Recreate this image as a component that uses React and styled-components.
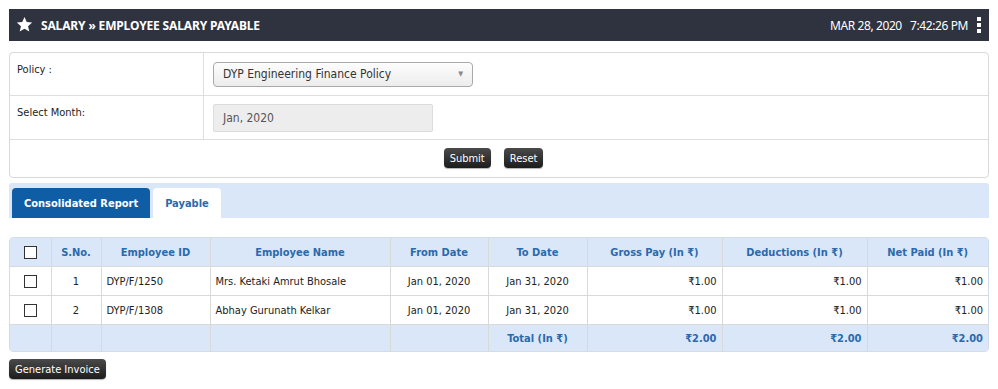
import React from 'react';
import styled, { createGlobalStyle } from 'styled-components';

const GlobalStyle = createGlobalStyle`
  body {
    margin: 0;
    padding: 9px;
    background: #fff;
    font-family: Tahoma, "DejaVu Sans Condensed", "DejaVu Sans", sans-serif;
    font-size: 11px;
    color: #333;
  }
`;

const rows = [
  { id: 'DYP/F/1250', name: 'Mrs. Ketaki Amrut Bhosale' },
  { id: 'DYP/F/1308', name: 'Abhay Gurunath Kelkar' },
];

const StarIcon = () => (
  <svg width="17" height="17" viewBox="0 0 24 24">
    <path
      fill="#fff"
      d="M12 1.5l3.2 7.1 7.6.7-5.8 5.1 1.8 7.6L12 18l-6.8 4 1.8-7.6-5.8-5.1 7.6-.7z"
    />
  </svg>
);

const App = () => {
  return (
    <>
      <GlobalStyle />
      <Page>
        <TitleBar>
          <StarIcon />
          <Title>SALARY » EMPLOYEE SALARY PAYABLE</Title>
          <Clock>MAR 28, 2020&nbsp;&nbsp;&nbsp;7:42:26 PM</Clock>
          <Kebab>
            <i />
            <i />
            <i />
          </Kebab>
        </TitleBar>

        <FormBox>
          <FormRow h={42}>
            <Label>Policy :</Label>
            <Field>
              <Select>
                DYP Engineering Finance Policy
                <Caret>▼</Caret>
              </Select>
            </Field>
          </FormRow>
          <FormRow h={43}>
            <Label>Select Month:</Label>
            <Field>
              <MonthInput>Jan, 2020</MonthInput>
            </Field>
          </FormRow>
          <Actions>
            <Button>Submit</Button>
            <Button>Reset</Button>
          </Actions>
        </FormBox>

        <Tabs>
          <Tab active>Consolidated Report</Tab>
          <Tab>Payable</Tab>
        </Tabs>

        <TableWrap>
          <Table>
            <colgroup>
              <col style={{ width: 41 }} />
              <col style={{ width: 50 }} />
              <col style={{ width: 109 }} />
              <col style={{ width: 180 }} />
              <col style={{ width: 98 }} />
              <col style={{ width: 99 }} />
              <col style={{ width: 135 }} />
              <col style={{ width: 145 }} />
              <col />
            </colgroup>
            <thead>
              <tr>
                <Th><Check /></Th>
                <Th>S.No.</Th>
                <Th>Employee ID</Th>
                <Th>Employee Name</Th>
                <Th>From Date</Th>
                <Th>To Date</Th>
                <Th>Gross Pay (In ₹)</Th>
                <Th>Deductions (In ₹)</Th>
                <Th>Net Paid (In ₹)</Th>
              </tr>
            </thead>
            <tbody>
              {rows.map((r, i) => (
                <tr key={r.id}>
                  <Td align="center"><Check /></Td>
                  <Td align="center">{i + 1}</Td>
                  <Td>{r.id}</Td>
                  <Td>{r.name}</Td>
                  <Td align="center">Jan 01, 2020</Td>
                  <Td align="center">Jan 31, 2020</Td>
                  <Td align="right">₹1.00</Td>
                  <Td align="right">₹1.00</Td>
                  <Td align="right">₹1.00</Td>
                </tr>
              ))}
            </tbody>
            <tfoot>
              <tr>
                <Tf />
                <Tf />
                <Tf />
                <Tf />
                <Tf />
                <Tf align="center">Total (In ₹)</Tf>
                <Tf align="right">₹2.00</Tf>
                <Tf align="right">₹2.00</Tf>
                <Tf align="right">₹2.00</Tf>
              </tr>
            </tfoot>
          </Table>
        </TableWrap>

        <Button>Generate Invoice</Button>
      </Page>
    </>
  );
};

export default App;

const Page = styled.div`
  width: 980px;
`;

const TitleBar = styled.div`
  display: flex;
  align-items: center;
  height: 32px;
  padding: 0 8px 0 7px;
  background-color: #2e333f;
  color: #fff;
  margin-bottom: 11px;

  svg {
    margin-top: -2px;
  }
`;

const Title = styled.div`
  margin-left: 8px;
  font-family: "Noto Sans", "Open Sans", sans-serif;
  font-weight: 700;
  font-size: 12px;
  letter-spacing: -0.15px;
  flex: 1;
`;

const Clock = styled.div`
  font-family: "Noto Sans", "Open Sans", sans-serif;
  font-size: 12px;
  letter-spacing: -0.4px;
`;

const Kebab = styled.div`
  display: flex;
  flex-direction: column;
  gap: 2px;
  margin-left: 9px;

  i {
    display: block;
    width: 4px;
    height: 4px;
    background: #fff;
  }
`;

const FormBox = styled.div`
  border: 1px solid #d9d9d9;
  border-radius: 4px;
  margin-bottom: 5px;
`;

const FormRow = styled.div`
  display: flex;
  border-bottom: 1px solid #dedede;
  height: ${(p) => p.h}px;
`;

const Label = styled.div`
  width: 186px;
  padding: 10px 0 0 7px;
  border-right: 1px solid #dedede;
  font-size: 11px;
  color: #222;
`;

const Field = styled.div`
  display: flex;
  align-items: center;
  padding-left: 9px;
`;

const Select = styled.div`
  display: flex;
  align-items: center;
  justify-content: space-between;
  box-sizing: border-box;
  width: 260px;
  height: 25px;
  padding: 0 9px;
  border: 1px solid #a9a9a9;
  border-radius: 4px;
  background: linear-gradient(#fdfdfd, #ececec);
  font-size: 12px;
  color: #333;
`;

const Caret = styled.span`
  font-size: 7px;
  color: #8a8a8a;
`;

const MonthInput = styled.div`
  display: flex;
  align-items: center;
  box-sizing: border-box;
  width: 220px;
  height: 28px;
  padding: 0 9px;
  border: 1px solid #dcdcdc;
  border-radius: 2px;
  background: #ededed;
  font-size: 12px;
  color: #555;
`;

const Actions = styled.div`
  display: flex;
  justify-content: center;
  gap: 13px;
  padding: 8px 11px 9px 0;
`;

const Button = styled.button`
  display: inline-flex;
  align-items: center;
  height: 20px;
  padding: 0 6px;
  border: none;
  border-radius: 4px;
  background: linear-gradient(#4a4a4a, #1c1c1c);
  color: #fff;
  font-family: Tahoma, "DejaVu Sans Condensed", "DejaVu Sans", sans-serif;
  font-size: 11px;
  box-shadow: 0 1px 1px rgba(0, 0, 0, 0.3);
`;

const Tabs = styled.div`
  display: flex;
  align-items: flex-end;
  gap: 3px;
  height: 35px;
  padding: 0 3px;
  background: #dae7f8;
  border-radius: 3px 3px 0 0;
  margin-bottom: 19px;
`;

const Tab = styled.div`
  display: flex;
  align-items: center;
  height: 30px;
  padding: 0 12px;
  border-radius: 4px 4px 0 0;
  background: ${(p) => (p.active ? '#0e5da5' : '#fff')};
  color: ${(p) => (p.active ? '#fff' : '#2a6aad')};
  font-weight: 700;
  font-size: 11px;
`;

const TableWrap = styled.div`
  border: 1px solid #d3dde9;
  border-radius: 4px;
  overflow: hidden;
  margin-bottom: 7px;
`;

const Table = styled.table`
  width: 100%;
  border-collapse: collapse;
  table-layout: fixed;

  tr > *:first-child {
    border-left: none;
  }
  tr > *:last-child {
    border-right: none;
  }
  thead tr > * {
    border-top: none;
  }
  tfoot tr > * {
    border-bottom: none;
  }
`;

const Th = styled.th`
  height: 28px;
  padding: 0 5px;
  background: #dae7f8;
  border: 1px solid #d9d9d9;
  color: #2a6aad;
  font-size: 11px;
  font-weight: 700;
  text-align: center;
`;

const Td = styled.td`
  height: 28px;
  padding: 0 5px;
  border: 1px solid #d9d9d9;
  text-align: ${(p) => p.align || 'left'};
  font-size: 11px;
  color: #222;
  white-space: nowrap;
`;

const Tf = styled.td`
  height: 26px;
  padding: 0 5px;
  background: #dae7f8;
  border: 1px solid #d9d9d9;
  color: #2a6aad;
  font-weight: 700;
  font-size: 11px;
  text-align: ${(p) => p.align || 'left'};
`;

const Check = styled.span`
  display: inline-block;
  vertical-align: middle;
  width: 11px;
  height: 11px;
  border: 1px solid #333;
  background: #fff;
`;
